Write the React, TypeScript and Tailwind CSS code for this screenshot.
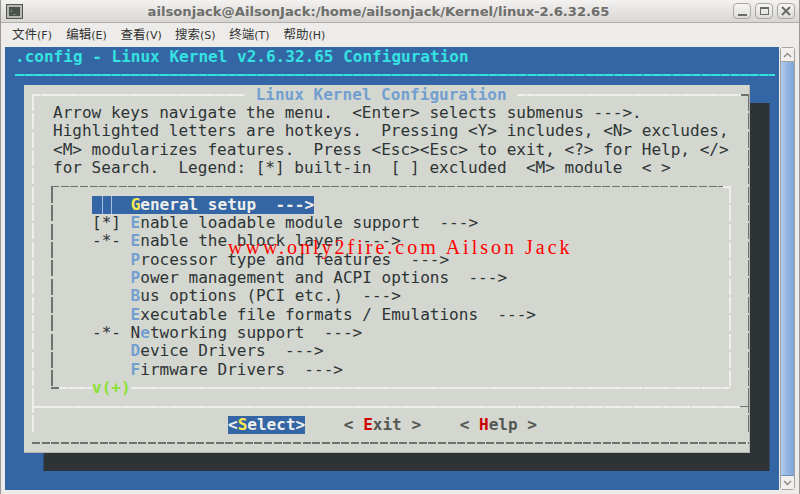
import React from 'react';

const darkH = 'h-[1.5px] bg-[repeating-linear-gradient(90deg,#6f736d_0_8px,transparent_8px_9.67px)]';
const lightH = 'h-[2px] bg-[repeating-linear-gradient(90deg,#eeeeec_0_8.5px,#e0e2dc_8.5px_9.67px)]';
const darkV = 'w-[1.5px] bg-[repeating-linear-gradient(180deg,#6f736d_0_16px,transparent_16px_18.33px)]';
const lightV = 'w-[2px] bg-[repeating-linear-gradient(180deg,#eeeeec_0_16px,transparent_16px_18.33px)]';

const menus = [
  ['文件', '(F)'],
  ['编辑', '(E)'],
  ['查看', '(V)'],
  ['搜索', '(S)'],
  ['终端', '(T)'],
  ['帮助', '(H)'],
];

const helpLines = [
  'Arrow keys navigate the menu.  <Enter> selects submenus --->.',
  'Highlighted letters are hotkeys.  Pressing <Y> includes, <N> excludes,',
  '<M> modularizes features.  Press <Esc><Esc> to exit, <?> for Help, </>',
  'for Search.  Legend: [*] built-in  [ ] excluded  <M> module  < >',
];

// prefix, text before hotkey, hotkey, text after hotkey
const items = [
  ['[*] ', '', 'E', 'nable loadable module support  --->'],
  ['-*- ', '', 'E', 'nable the block layer  --->'],
  ['    ', '', 'P', 'rocessor type and features  --->'],
  ['    ', '', 'P', 'ower management and ACPI options  --->'],
  ['    ', '', 'B', 'us options (PCI etc.)  --->'],
  ['    ', '', 'E', 'xecutable file formats / Emulations  --->'],
  ['-*- ', 'N', 'e', 'tworking support  --->'],
  ['    ', '', 'D', 'evice Drivers  --->'],
  ['    ', '', 'F', 'irmware Drivers  --->'],
];

const Row: React.FC<{ children: React.ReactNode; className?: string }> = ({ children, className = '' }) => (
  <div className={`h-[18.33px] leading-[18.33px] whitespace-pre ${className}`}>{children}</div>
);

const WinButton: React.FC<{ children: React.ReactNode }> = ({ children }) => (
  <div className="w-[18px] h-[16px] rounded-[4px] border border-[#a9a7a3] bg-gradient-to-b from-[#f7f6f5] to-[#dedcd9] flex items-center justify-center">
    {children}
  </div>
);

const App: React.FC = () => {
  return (
    <div className="w-[800px] h-[494px] bg-[#edecea] flex flex-col overflow-hidden relative font-['DejaVu_Sans',sans-serif] border-x border-[#9a9895]">
      {/* title bar */}
      <div className="h-[23px] shrink-0 flex items-center pl-[5px] pr-[4px] rounded-t-[5px] bg-gradient-to-b from-[#f3f2f1] to-[#d8d6d3] border-b border-[#b0aeaa]">
        <div className="w-[17px] h-[15px] border border-[#55554f] bg-[#b9b7b3] p-[2px] shrink-0">
          <div className="w-full h-full bg-[#4a504c] text-[#9fb09a] text-[7px] leading-[9px] pl-[1px]">›_</div>
        </div>
        <div className="flex-1 text-center text-[13.15px] font-bold text-[#6e6e6b] pt-[1px] pl-[1px] whitespace-nowrap">
          ailsonjack@AilsonJack:/home/ailsonjack/Kernel/linux-2.6.32.65
        </div>
        <div className="flex gap-[4px]">
          <WinButton><div className="w-[9px] h-[2px] mt-[7px] bg-[#6b6b68]" /></WinButton>
          <WinButton><div className="w-[9px] h-[8px] border border-[#6b6b68] border-t-2" /></WinButton>
          <WinButton>
            <svg width="10" height="10" viewBox="0 0 10 10">
              <path d="M1 1 L9 9 M9 1 L1 9" stroke="#6b6b68" strokeWidth="2" />
            </svg>
          </WinButton>
        </div>
      </div>

      {/* menu bar */}
      <div className="h-[24px] shrink-0 flex items-center pt-[1px] pl-[11px] gap-[11.3px] text-[#333331] font-['DejaVu_Sans','Noto_Sans_CJK_SC',sans-serif]">
        {menus.map(([label, key]) => (
          <span key={key} className="w-[43px] whitespace-nowrap text-[12.5px]">
            {label}<span className="text-[11px]">{key}</span>
          </span>
        ))}
      </div>

      {/* terminal */}
      <div className="flex-1 flex pl-[4px] pr-[4px] pb-[4px] gap-[1px] min-h-0">
        <div className="flex-1 min-w-0 bg-[#3465a4] font-['DejaVu_Sans_Mono',monospace] text-[16.05px] text-[#2e3436]">
          {/* backtitle */}
          <Row className="pl-[10px] mt-[1px] text-[#34e2e2] font-bold">.config - Linux Kernel v2.6.32.65 Configuration</Row>
          <div className="mt-[7.5px] ml-[10px] mr-[4px] h-[2px] bg-[repeating-linear-gradient(90deg,#34e2e2_0_8.5px,#2fb8c8_8.5px_9.67px)]" />

          {/* dialog */}
          <div className="ml-[19px] mt-[9px] w-[726px] h-[368px] bg-[#d3d7cf] shadow-[19.5px_18px_0_#2e3436] border-r border-b border-[#b4b7b0] pl-[8px] pt-[1px]">
            <div className="w-[717px] flex flex-col">
              <div className="h-[18.33px] flex items-center">
                <div className={`w-[213px] ${lightH}`} />
                <div className="px-[1px] leading-[18.33px] text-[#729fcf] font-bold whitespace-pre"> Linux Kernel Configuration </div>
                <div className={`flex-1 ${lightH}`} />
                <div className="w-[8px] h-[1.5px] bg-[#6f736d]" />
              </div>

              <div className="flex">
                <div className={`-mt-[9px] ${lightV}`} />
                <div className="flex-1 min-w-0 pl-[19px]">
                  {helpLines.map((l) => (
                    <Row key={l}>{l}</Row>
                  ))}

                  {/* menu list */}
                  <div className="w-[680px] -ml-[2px] flex flex-col">
                    <div className="h-[18.33px] flex items-center">
                      <div className={`flex-1 ${darkH}`} />
                      <div className={`w-[8px] ${lightH}`} />
                    </div>
                    <div className="flex">
                      <div className={`-my-[9px] ${darkV}`} />
                      <div className="flex-1 pl-[39.5px]">
                        <Row>
                          <span className="inline-flex bg-[#3465a4] text-[#eeeeec] font-bold">
                            <span className="w-[9.67px]" />
                            <span className="w-[10.5px] h-[18.33px] border-x border-[#a9bfdc]" />
                            <span className="w-[18.5px]" />
                            <span className="text-[#fce94f]">G</span>
                            <span>eneral setup  ---&gt;</span>
                          </span>
                        </Row>
                        {items.map(([prefix, before, hot, rest]) => (
                          <Row key={rest}>
                            {prefix}{before}
                            <span className="text-[#729fcf] font-bold">{hot}</span>
                            {rest}
                          </Row>
                        ))}
                      </div>
                      <div className={`-my-[9px] ${lightV}`} />
                    </div>
                    <div className="h-[18.33px] flex items-center">
                      <div className="w-[8px] h-[1.5px] bg-[#6f736d]" />
                      <div className={`w-[33px] ${lightH}`} />
                      <span className="leading-[18.33px] text-[#8ae234] font-bold">v(+)</span>
                      <div className={`flex-1 ${lightH}`} />
                    </div>
                  </div>
                </div>
                <div className={`-mt-[9px] ${darkV}`} />
              </div>

              {/* separator */}
              <div className="flex">
                <div className={lightV} />
                <div className="flex-1 h-[18.33px] flex items-center">
                  <div className={`flex-1 ${lightH}`} />
                  <div className="w-[8px] h-[1.5px] bg-[#6f736d]" />
                </div>
                <div className={darkV} />
              </div>

              {/* buttons */}
              <div className="flex">
                <div className={lightV} />
                <Row className="flex-1 pl-[194px] font-bold text-[#555753]">
                  <span className="bg-[#3465a4] text-[#eeeeec] inline-block">&lt;<span className="text-[#fce94f]">S</span>elect&gt;</span>
                  {'    < '}
                  <span className="text-[#cc0000]">E</span>
                  {'xit >    < '}
                  <span className="text-[#cc0000]">H</span>
                  {'elp >'}
                </Row>
                <div className={darkV} />
              </div>

              <div className="h-[18.33px] flex items-center">
                <div className={`flex-1 ${darkH}`} />
              </div>
            </div>
          </div>
        </div>

        {/* scrollbar */}
        <div className="w-[15px] flex flex-col border border-[#a5a3a0] rounded-[3px] bg-[#dcdad7]">
          <div className="h-[14px] shrink-0 flex items-center justify-center bg-[#f0efee] border-b border-[#a5a3a0]">
            <svg width="9" height="6" viewBox="0 0 9 6"><path d="M1 5 L4.5 1.5 L8 5" fill="none" stroke="#8b8986" strokeWidth="1.4" /></svg>
          </div>
          <div className="flex-1 bg-gradient-to-r from-[#b3cdef] via-[#94b5e1] to-[#7fa4d6] border-b border-[#6d8fbd]" />
          <div className="h-[13px] shrink-0 flex items-center justify-center bg-[#f0efee]">
            <svg width="9" height="6" viewBox="0 0 9 6"><path d="M1 1 L4.5 4.5 L8 1" fill="none" stroke="#8b8986" strokeWidth="1.4" /></svg>
          </div>
        </div>
      </div>

      {/* watermark */}
      <div className="absolute left-[227px] top-[235px] text-[20px] leading-[24px] tracking-[3px] text-[#ff0000] whitespace-pre font-['Liberation_Serif',serif]">
        www.only2fire.com Ailson Jack
      </div>
    </div>
  );
};

export default App;
